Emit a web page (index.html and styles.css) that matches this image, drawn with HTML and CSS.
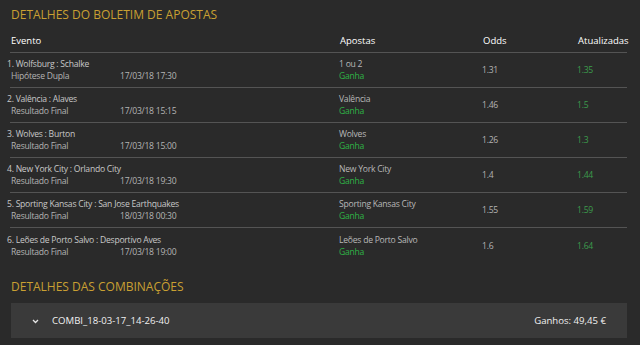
FILE: index.html
```html
<!DOCTYPE html>
<html lang="pt">
<head>
<meta charset="utf-8">
<link rel="stylesheet" href="styles.css">
</head>
<body>
<div class="page">
  <h2 class="section-title">DETALHES DO BOLETIM DE APOSTAS</h2>
  <div class="table">
    <div class="row head">
      <div class="h">Evento</div>
      <div class="h">Apostas</div>
      <div class="h">Odds</div>
      <div class="h">Atualizadas</div>
    </div>
    <div class="row">
      <div class="c-ev"><div class="name">1. Wolfsburg : Schalke</div><div class="sub"><span class="mkt">Hipótese Dupla</span><span>17/03/18 17:30</span></div></div>
      <div class="c-ap"><div>1 ou 2</div><div class="win">Ganha</div></div>
      <div class="c-od">1.31</div>
      <div class="c-up">1.35</div>
    </div>
    <div class="row">
      <div class="c-ev"><div class="name">2. Valência : Alaves</div><div class="sub"><span class="mkt">Resultado Final</span><span>17/03/18 15:15</span></div></div>
      <div class="c-ap"><div>Valência</div><div class="win">Ganha</div></div>
      <div class="c-od">1.46</div>
      <div class="c-up">1.5</div>
    </div>
    <div class="row">
      <div class="c-ev"><div class="name">3. Wolves : Burton</div><div class="sub"><span class="mkt">Resultado Final</span><span>17/03/18 15:00</span></div></div>
      <div class="c-ap"><div>Wolves</div><div class="win">Ganha</div></div>
      <div class="c-od">1.26</div>
      <div class="c-up">1.3</div>
    </div>
    <div class="row">
      <div class="c-ev"><div class="name">4. New York City : Orlando City</div><div class="sub"><span class="mkt">Resultado Final</span><span>17/03/18 19:30</span></div></div>
      <div class="c-ap"><div>New York City</div><div class="win">Ganha</div></div>
      <div class="c-od">1.4</div>
      <div class="c-up">1.44</div>
    </div>
    <div class="row">
      <div class="c-ev"><div class="name">5. Sporting Kansas City : San Jose Earthquakes</div><div class="sub"><span class="mkt">Resultado Final</span><span>18/03/18 00:30</span></div></div>
      <div class="c-ap"><div>Sporting Kansas City</div><div class="win">Ganha</div></div>
      <div class="c-od">1.55</div>
      <div class="c-up">1.59</div>
    </div>
    <div class="row last">
      <div class="c-ev"><div class="name">6. Leões de Porto Salvo : Desportivo Aves</div><div class="sub"><span class="mkt">Resultado Final</span><span>17/03/18 19:00</span></div></div>
      <div class="c-ap"><div>Leões de Porto Salvo</div><div class="win">Ganha</div></div>
      <div class="c-od">1.6</div>
      <div class="c-up">1.64</div>
    </div>
  </div>
  <h2 class="section-title second">DETALHES DAS COMBINAÇÕES</h2>
  <div class="combi">
    <svg class="chev" width="7" height="5" viewBox="0 0 7 5"><path d="M1 1 L3.5 3.5 L6 1" fill="none" stroke="#e6e6e6" stroke-width="1.3"/></svg>
    <span class="combi-name">COMBI_18-03-17_14-26-40</span>
    <span class="gains">Ganhos: 49,45 €</span>
  </div>
</div>
</body>
</html>
```
FILE: styles.css
```css
html, body {
  margin: 0;
  padding: 0;
  background: #2a2a2a;
}
.page {
  font-family: "Open Sans", "Noto Sans", sans-serif;
  color: #bdbdbd;
  padding: 6px 13px 0 10px;
}
.section-title {
  margin: 0;
  font-weight: 400;
  font-size: 12px;
  line-height: 18px;
  color: #c9a032;
  padding-left: 1px;
}
.table {
  margin-top: 10px;
}
.row {
  display: grid;
  grid-template-columns: 329px 143px 95px 1fr;
  align-items: center;
  height: 35px;
  border-bottom: 1px solid #545454;
  box-sizing: border-box;
  font-size: 8.6px;
  letter-spacing: -0.25px;
  line-height: 12px;
}
.row.head {
  height: 19px;
  align-items: start;
  font-size: 9.5px;
  letter-spacing: 0;
  padding-top: 1px;
}
.h {
  color: #ffffff;
  padding-left: 1px;
}
.row.last {
  border-bottom: none;
}
.c-ev .name {
  margin-left: -3px;
  color: #c8c8c8;
}
.sub {
  display: flex;
  color: #b4b4b4;
  padding-left: 1px;
}
.mkt {
  width: 109px;
}
.c-ap {
  color: #b8b8b8;
}
.win {
  color: #2fb346;
}
.c-od {
  color: #b4b4b4;
}
.c-up {
  color: #3c9c4c;
}
.section-title.second {
  margin-top: 15px;
}
.combi {
  margin-top: 7px;
  margin-left: 1px;
  height: 35px;
  background: #3a3a3a;
  display: flex;
  align-items: center;
  padding: 0 21px 0 21px;
  font-size: 9.6px;
  color: #f0f0f0;
}
.chev {
  margin-right: 13px;
  margin-top: 1px;
}
.combi-name {
  flex: 1;
}
```
